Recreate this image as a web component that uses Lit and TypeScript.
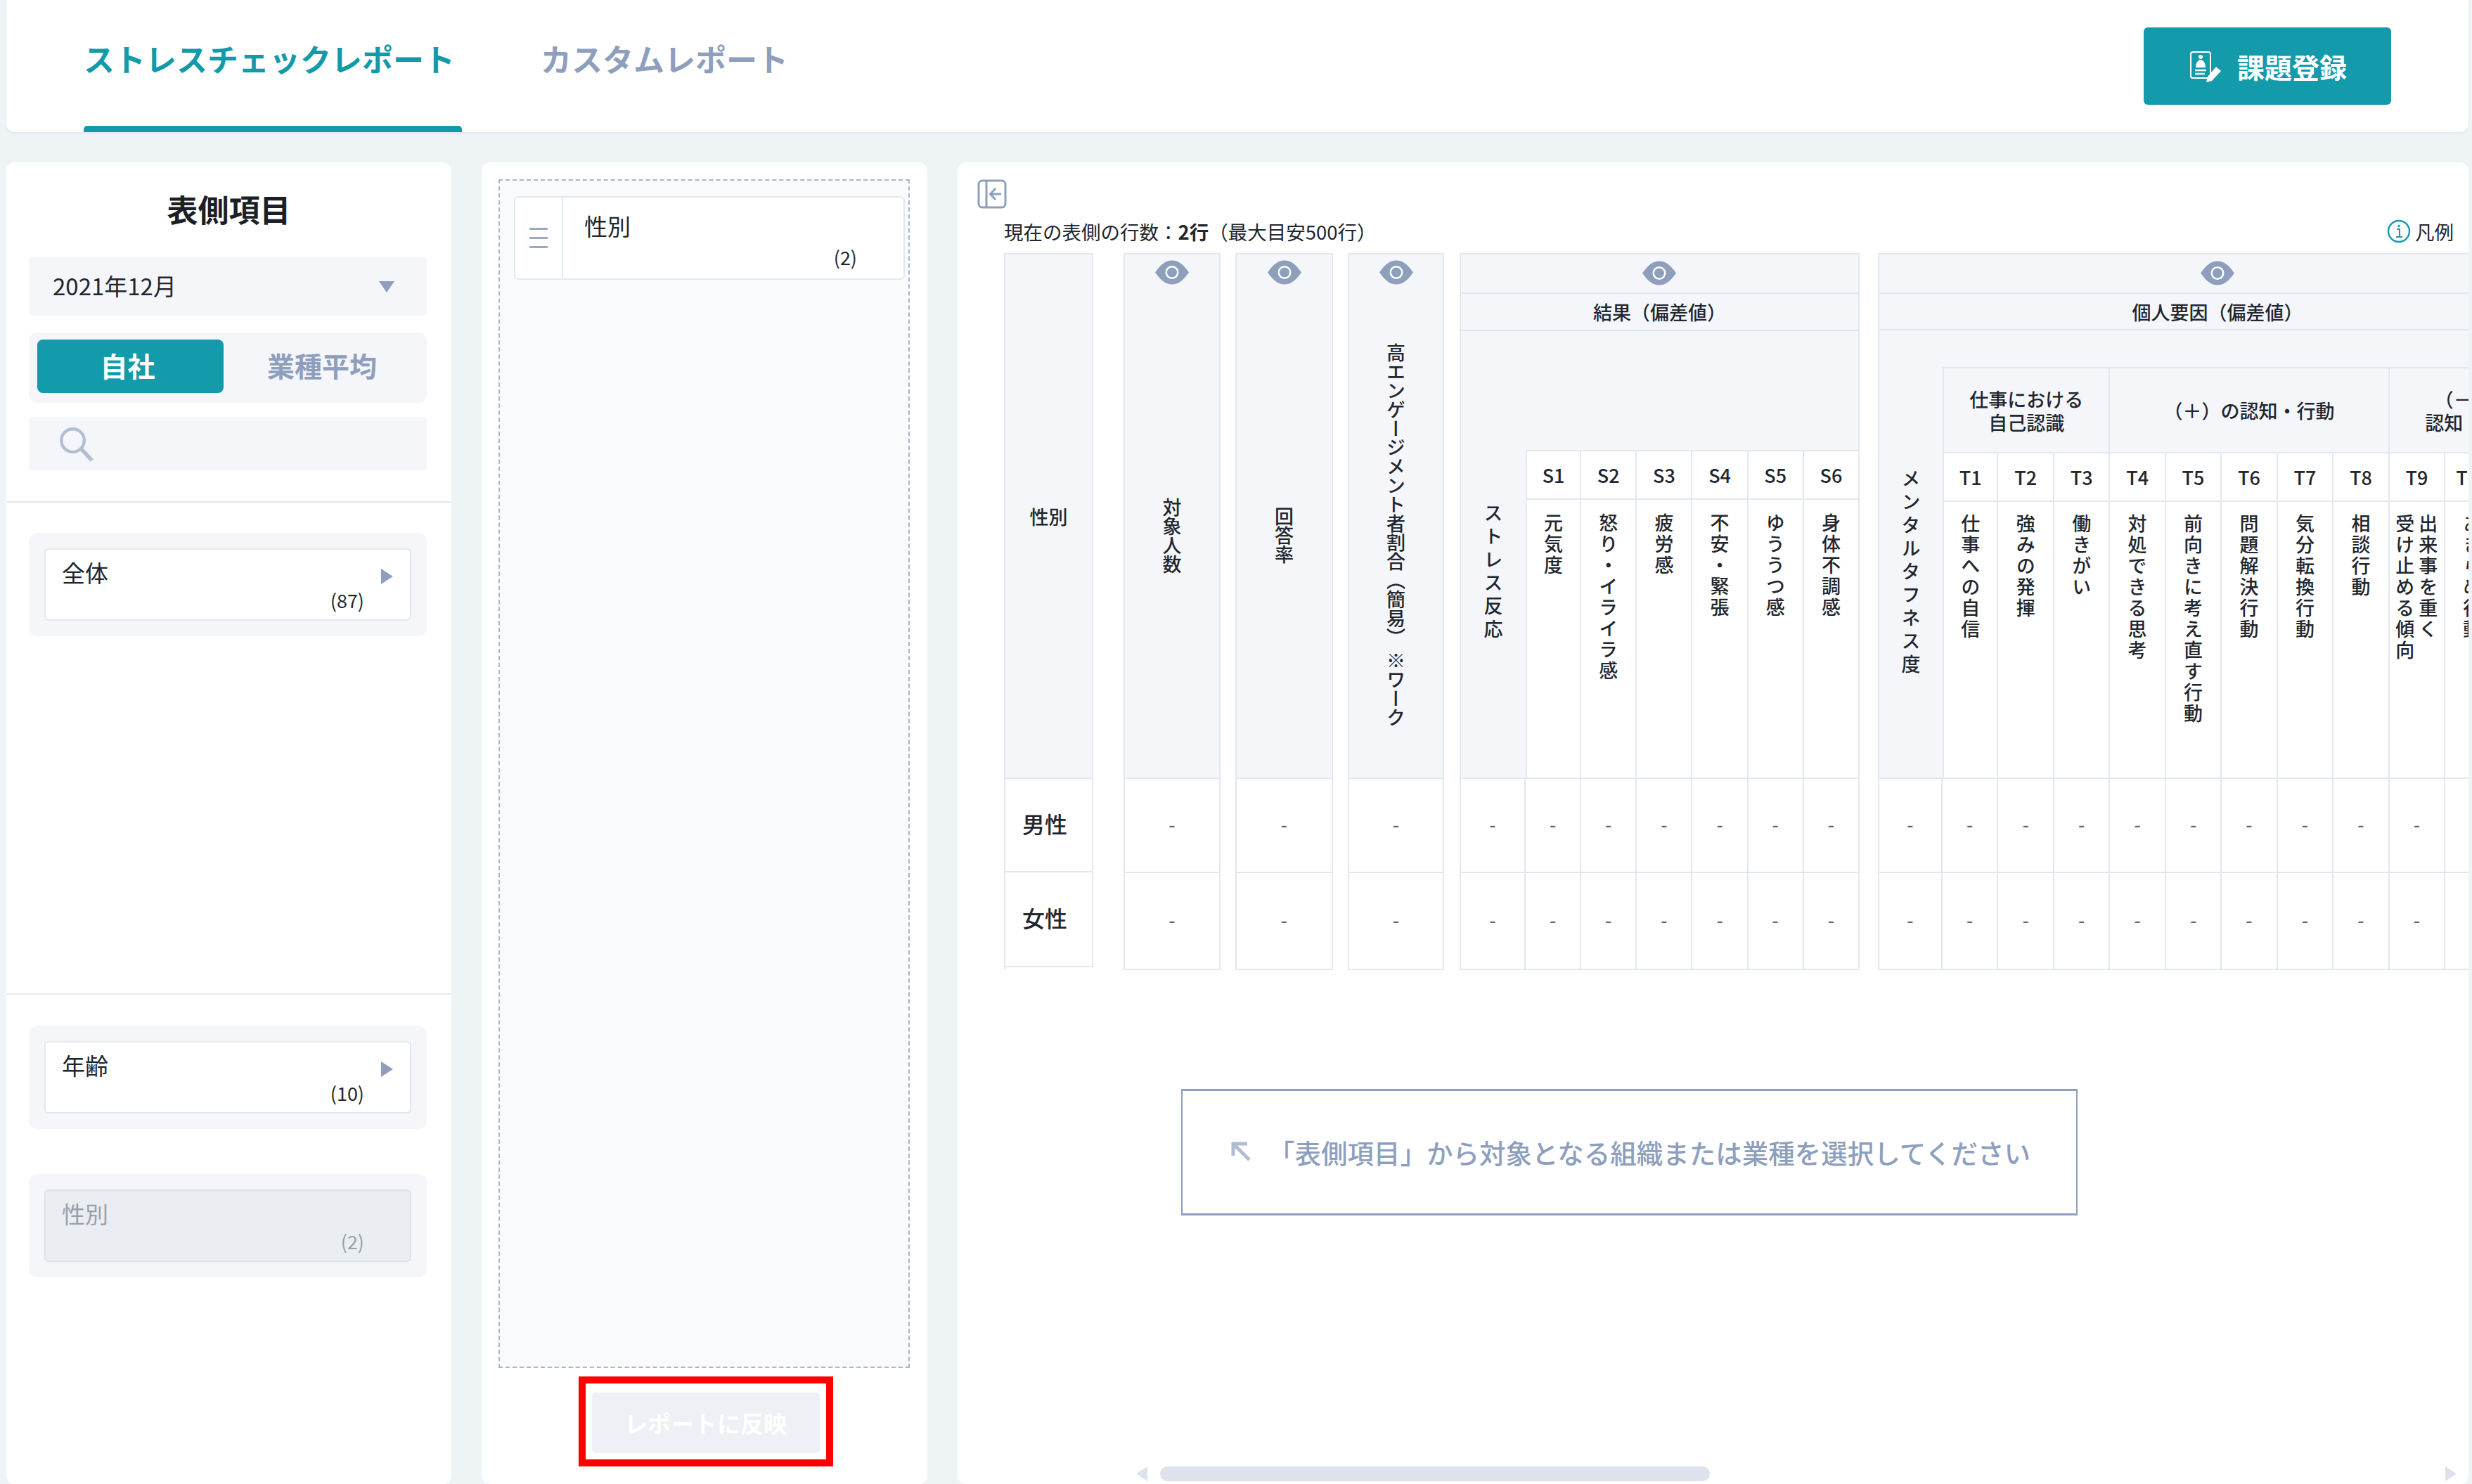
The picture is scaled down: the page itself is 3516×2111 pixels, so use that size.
import { LitElement, html, css } from "lit";
import { customElement } from "lit/decorators.js";

const eye = html`<svg class="eye" viewBox="0 0 50 35"><path d="M1 17.5C9 6 16 0.5 25 0.5S41 6 49 17.5C41 29 34 34.5 25 34.5S9 29 1 17.5Z" fill="#8e9fbd"/><circle cx="25" cy="17.5" r="9.5" fill="#fff"/><circle cx="25" cy="17.5" r="7" fill="#8e9fbd"/></svg>`;

const S = [
  ["S1", "元気度"],
  ["S2", "怒り・イライラ感"],
  ["S3", "疲労感"],
  ["S4", "不安・緊張"],
  ["S5", "ゆううつ感"],
  ["S6", "身体不調感"],
];
const T = [
  ["T1", "仕事への自信"],
  ["T2", "強みの発揮"],
  ["T3", "働きがい"],
  ["T4", "対処できる思考"],
  ["T5", "前向きに考え直す行動"],
  ["T6", "問題解決行動"],
  ["T7", "気分転換行動"],
  ["T8", "相談行動"],
  ["T9", "出来事を重く 受け止める傾向"],
  ["T10", "あきらめ行動"],
  ["T11", "回避行動"],
];

const dashes = (n: number) =>
  Array.from({ length: n }, () => html`<div class="cell data">-</div>`);

@customElement("app-root")
export class AppRoot extends LitElement {
  static styles = css`
    :host {
      display: block;
      width: 3516px;
      height: 2111px;
      overflow: hidden;
      background: #eef3f6;
      font-family: "Noto Sans CJK JP", "Noto Sans", sans-serif;
      color: #22262e;
    }
    * { box-sizing: border-box; }
    .top {
      height: 188px;
      margin: 0 5px 0 9px;
      padding: 0 110px;
      background: #fff;
      border-radius: 0 0 12px 12px;
      box-shadow: 0 2px 3px #e3e8ee;
      display: flex;
    }
    .tab {
      height: 188px;
      padding-top: 50px;
      line-height: 66px;
      font-size: 44px;
      font-weight: 700;
      color: #8e9fbd;
      text-align: center;
      border-bottom: 9px solid transparent;
    }
    .tab.on {
      width: 538px;
      padding-right: 10px;
      color: #129aa9;
      position: relative;
    }
    .tab.on::after {
      content: "";
      position: absolute;
      left: 0;
      right: 0;
      bottom: -9px;
      height: 9px;
      background: #129aa9;
      border-radius: 5px 5px 0 0;
    }
    .tab.off { margin-left: 112px; }
    .reg {
      margin: 39px 0 0 auto;
      width: 352px;
      height: 110px;
      background: #139aab;
      border-radius: 6px;
      color: #fff;
      font-size: 39px;
      font-weight: 700;
      display: flex;
      align-items: center;
      justify-content: center;
      gap: 20px;
    }
    .reg svg { width: 50px; height: 50px; }
    .main {
      display: flex;
      height: 1880px;
      margin: 43px 5px 0 9px;
      gap: 43px;
    }
    .panel {
      background: #fff;
      border-radius: 12px;
      flex: none;
    }
    .left { width: 633px; }
    .title {
      height: 134px;
      padding-bottom: 3px;
      font-size: 44px;
      font-weight: 700;
      display: flex;
      align-items: center;
      justify-content: center;
      color: #1c1f26;
    }
    .ctrl { margin: 0 35px 0 32px; background: #f4f6fa; border-radius: 4px; }
    .select {
      height: 84px;
      padding: 0 34px 3px;
      font-size: 33px;
      display: flex;
      align-items: center;
      justify-content: space-between;
    }
    .tri-down {
      width: 22px;
      height: 16px;
      margin: 5px 12px 0 0;
      background: #8e9fbd;
      clip-path: polygon(0 0, 100% 0, 50% 100%);
    }
    .toggle {
      height: 100px;
      margin-top: 24px;
      padding: 10px 12px 14px;
      border-radius: 12px;
      display: grid;
      grid-template-columns: 265px 1fr;
      font-size: 39px;
      font-weight: 700;
      color: #8e9fbd;
    }
    .toggle div { display: flex; align-items: center; justify-content: center; padding-bottom: 4px; }
    .toggle .sel { background: #139aab; color: #fff; border-radius: 8px; padding-right: 8px; }
    .toggle .oth { padding-left: 3px; }
    .search {
      height: 75px;
      margin-top: 21px;
      padding: 13px 0 0 43px;
    }
    .search svg { width: 50px; height: 50px; display: block; }
    .sec {
      border-top: 2px solid #e3e8f0;
      padding-top: 43px;
    }
    .sec.one { margin-top: 44px; height: 700px; }
    .sec.two { padding-top: 44px; }
    .group {
      margin: 0 35px 0 32px;
      padding: 22px;
      background: #f4f6fa;
      border-radius: 12px;
    }
    .group + .group { margin-top: 64px; }
    .card {
      height: 103px;
      position: relative;
      background: #fff;
      border: 2px solid #e3e7ef;
      border-radius: 6px;
      padding: 12px 65px 0 23px;
      font-size: 33px;
      line-height: 40px;
    }
    .card .n {
      text-align: right;
      font-size: 27px;
      line-height: 36px;
      margin-top: 2px;
    }
    .card.off { background: #eaedf2; color: #9a9fa8; border-color: #dde1e8; }
    .tri-right {
      position: absolute;
      right: 24px;
      top: 27px;
      width: 17px;
      height: 22px;
      background: #8e9fbd;
      clip-path: polygon(0 0, 100% 50%, 0 100%);
    }
    .mid {
      width: 634px;
      padding: 24px 25px 0 24px;
      display: flex;
      flex-direction: column;
      align-items: center;
    }
    .drop {
      width: 100%;
      height: 1691px;
      background: #f9fafc;
      border: 2px dashed #aab5cc;
      padding: 22px 5px 0 20px;
    }
    .mcard {
      height: 119px;
      display: flex;
      background: #fff;
      border: 2px solid #e3e7ef;
      border-radius: 6px;
    }
    .handle {
      width: 68px;
      flex: none;
      border-right: 2px solid #e3e7ef;
      padding: 0 20px;
      display: flex;
      flex-direction: column;
      justify-content: center;
      gap: 10px;
    }
    .handle i { display: block; height: 3px; background: #9aa8c3; }
    .mbody {
      flex: 1;
      padding: 19px 66px 0 30px;
      font-size: 33px;
      line-height: 42px;
    }
    .mbody .n { text-align: right; font-size: 27px; line-height: 36px; margin-top: 6px; }
    .redbox {
      margin-top: 12px;
      margin-left: 4px;
      width: 362px;
      height: 128px;
      border: 10px solid #ff0000;
      padding: 13px 9px 9px;
    }
    .apply {
      height: 86px;
      background: #edf0f4;
      border-radius: 5px;
      color: #fff;
      font-size: 33px;
      font-weight: 700;
      display: flex;
      align-items: center;
      justify-content: center;
    }
    .right {
      flex: 1;
      min-width: 0;
      overflow: hidden;
      padding-top: 24px;
      display: flex;
      flex-direction: column;
    }
    .collapse { width: 42px; height: 42px; margin-left: 28px; display: block; flex: none; }
    .status {
      height: 63px;
      padding: 1px 21px 0 66px;
      display: flex;
      align-items: center;
      justify-content: space-between;
      font-size: 27.5px;
      flex: none;
    }
    .status b { font-weight: 700; }
    .legend { display: flex; align-items: center; gap: 6px; }
    .legend svg { width: 34px; height: 34px; }
    .table {
      display: flex;
      margin-left: 66px;
      flex: none;
      font-size: 27px;
      font-weight: 500;
    }
    .g {
      flex: none;
      display: grid;
      border-top: 2px solid #e3e7f0;
      border-left: 2px solid #e3e7f0;
    }
    .cell {
      border-right: 2px solid #e3e7f0;
      border-bottom: 2px solid #e3e7f0;
      display: flex;
      align-items: center;
      justify-content: center;
      min-width: 0;
    }
    .h { background: #f4f6fa; }
    .data {
      font-size: 26px;
      font-weight: 500;
      color: #666;
      padding-bottom: 6px;
    }
    .g.head { width: 127px; margin-right: 43px; grid-template-rows: 746px 133px 135px; }
    .g.head .row { font-size: 32px; justify-content: flex-start; padding: 0 0 6px 24px; color: #22262e; }
    .g.s1 { grid-template-rows: 746px 134px 138px; }
    .a { width: 138px; margin-right: 21px; }
    .b { width: 139px; margin-right: 21px; }
    .c { width: 137px; margin-right: 22px; }
    .single { flex-direction: column; justify-content: flex-start; padding-top: 8px; }
    .single .v { flex: 1; display: flex; align-items: center; justify-content: center; padding-top: 12px; }
    .eye { width: 50px; height: 35px; display: block; flex: none; }
    .v { writing-mode: vertical-rl; }
    .g.res {
      width: 569px;
      margin-right: 26px;
      grid-template-columns: 92px repeat(6, 1fr);
      grid-template-rows: 56px 53px 171px 69px 397px 134px 138px;
    }
    .g.per {
      width: 966px;
      grid-template-columns: 90px repeat(11, 1fr);
      grid-template-rows: 56px 52px 54px 121px 69px 394px 134px 138px;
    }
    .wide { grid-column: 1 / -1; }
    .eyecell { padding-bottom: 2px; }
    .label { line-height: 33px; text-align: center; }
    .fa { border-right: none; }
    .fa .v2 { writing-mode: vertical-rl; letter-spacing: 6px; }
    .res .fa .v2 { padding-top: 53px; }
    .res .fa { grid-row: 3 / span 3; grid-column: 1; }
    .per .fa { grid-row: 3 / span 4; grid-column: 1; }
    .per .fa .v2 { padding-top: 54px; }
    .blank { grid-column: 2 / -1; }
    .first { border-left: 2px solid #e3e7f0; }
    .t1 { grid-column: 2 / span 3; }
    .t2 { grid-column: 5 / span 5; }
    .t3 { grid-column: 10 / span 3; }
    .name {
      align-items: flex-start;
      padding-top: 19px;
    }
    .per .name { padding-top: 17px; }
    .name .v { letter-spacing: 3px; line-height: 33px; }
    .name .v span { display: block; }
    .notice {
      flex: none;
      width: 1275px;
      height: 180px;
      margin: 169px 0 0 318px;
      border: 2px solid #8e9fbd;
      border-top-width: 3px;
      border-bottom-width: 3px;
      display: flex;
      align-items: center;
      justify-content: center;
      gap: 24px;
      color: #8e9fbd;
      font-size: 37.5px;
      font-weight: 500;
      padding: 0 0 2px 3px;
    }
    .notice svg { width: 30px; height: 30px; flex: none; }
    .scroll {
      flex: none;
      margin: auto 17px 4px 254px;
      height: 21px;
      display: flex;
      align-items: center;
      gap: 18px;
    }
    .arr { width: 16px; height: 21px; background: #dde2ec; }
    .arr.l { clip-path: polygon(100% 0, 0 50%, 100% 100%); }
    .arr.r { clip-path: polygon(0 0, 100% 50%, 0 100%); }
    .track { flex: 1; height: 21px; }
    .thumb { width: 782px; height: 21px; border-radius: 11px; background: #dde2ec; }
  `;

  private names(list: string[][]) {
    return list.map(([, n], i) => {
      const parts = n.split(" ");
      return html`<div class="cell name ${i === 0 ? "first" : ""}"><div class="v">${parts.map((p) => html`<span>${p}</span>`)}</div></div>`;
    });
  }

  private codes(list: string[][]) {
    return list.map(([c], i) => html`<div class="cell ${i === 0 ? "first" : ""}">${c}</div>`);
  }

  private single(cls: string, label: string) {
    return html`<div class="g s1 ${cls}">
      <div class="cell h single">${eye}<div class="v">${label}</div></div>
      ${dashes(2)}
    </div>`;
  }

  render() {
    return html`
      <div class="top">
        <div class="tab on">ストレスチェックレポート</div>
        <div class="tab off">カスタムレポート</div>
        <div class="reg">
          <svg viewBox="0 0 50 50">
            <rect x="4" y="5" width="28" height="37" rx="3" fill="none" stroke="#fff" stroke-width="2"/>
            <circle cx="18" cy="12" r="3" fill="#fff"/>
            <path d="M11 27C11 21 14 16 18 16S25 21 25 27Z" fill="#fff"/>
            <path d="M10 31H26M10 36H24" stroke="#fff" stroke-width="2.4"/>
            <path d="M40 26L47 32L34 46L26 48L28 40Z" fill="#fff"/>
          </svg>
          課題登録
        </div>
      </div>
      <div class="main">
        <div class="panel left">
          <div class="title">表側項目</div>
          <div class="ctrl select">2021年12月<div class="tri-down"></div></div>
          <div class="ctrl toggle"><div class="sel">自社</div><div class="oth">業種平均</div></div>
          <div class="ctrl search">
            <svg viewBox="0 0 46 46"><circle cx="18" cy="18" r="15" fill="none" stroke="#b3bdd3" stroke-width="4"/><path d="M29 29L43 44" stroke="#b3bdd3" stroke-width="5"/></svg>
          </div>
          <div class="sec one">
            <div class="group"><div class="card">全体<div class="n">(87)</div><div class="tri-right"></div></div></div>
          </div>
          <div class="sec two">
            <div class="group"><div class="card">年齢<div class="n">(10)</div><div class="tri-right"></div></div></div>
            <div class="group"><div class="card off">性別<div class="n">(2)</div></div></div>
          </div>
        </div>
        <div class="panel mid">
          <div class="drop">
            <div class="mcard">
              <div class="handle"><i></i><i></i><i></i></div>
              <div class="mbody">性別<div class="n">(2)</div></div>
            </div>
          </div>
          <div class="redbox"><div class="apply">レポートに反映</div></div>
        </div>
        <div class="panel right">
          <svg class="collapse" viewBox="0 0 42 42" fill="none" stroke="#8e9fbd" stroke-width="3">
            <rect x="2" y="2" width="38" height="38" rx="5"/>
            <path d="M13 2V40"/>
            <path d="M34 21H19M26 13L18.5 21L26 29"/>
          </svg>
          <div class="status">
            <div>現在の表側の行数：<b>2行</b>（最大目安500行）</div>
            <div class="legend">
              <svg viewBox="0 0 34 34"><circle cx="17" cy="17" r="15" fill="none" stroke="#139aab" stroke-width="2.4"/><path d="M14 14H18V25M13 25H22" fill="none" stroke="#139aab" stroke-width="2"/><circle cx="17" cy="9.5" r="1.7" fill="#139aab"/></svg>
              凡例
            </div>
          </div>
          <div class="table">
            <div class="g head">
              <div class="cell h">性別</div>
              <div class="cell row">男性</div>
              <div class="cell row">女性</div>
            </div>
            ${this.single("a", "対象人数")}
            ${this.single("b", "回答率")}
            ${this.single("c", "高エンゲージメント者割合（簡易） ※ワーク")}
            <div class="g res">
              <div class="cell h wide eyecell">${eye}</div>
              <div class="cell h wide">結果（偏差値）</div>
              <div class="cell h fa"><div class="v2">ストレス反応</div></div>
              <div class="cell h blank"></div>
              ${this.codes(S)}
              ${this.names(S)}
              ${dashes(14)}
            </div>
            <div class="g per">
              <div class="cell h wide eyecell">${eye}</div>
              <div class="cell h wide">個人要因（偏差値）</div>
              <div class="cell h fa"><div class="v2">メンタルタフネス度</div></div>
              <div class="cell h blank"></div>
              <div class="cell h t1 label first">仕事における<br />自己認識</div>
              <div class="cell h t2 label">（＋）の認知・行動</div>
              <div class="cell h t3 label">（－）の<br />認知・行動</div>
              ${this.codes(T)}
              ${this.names(T)}
              ${dashes(24)}
            </div>
          </div>
          <div class="notice">
            <svg viewBox="0 0 30 30" fill="none" stroke="#b0bcd2" stroke-width="5"><path d="M4 21V4H24M4 4L27 27"/></svg>
            <span>「表側項目」から対象となる組織または業種を選択してください</span>
          </div>
          <div class="scroll">
            <div class="arr l"></div>
            <div class="track"><div class="thumb"></div></div>
            <div class="arr r"></div>
          </div>
        </div>
      </div>
    `;
  }
}
